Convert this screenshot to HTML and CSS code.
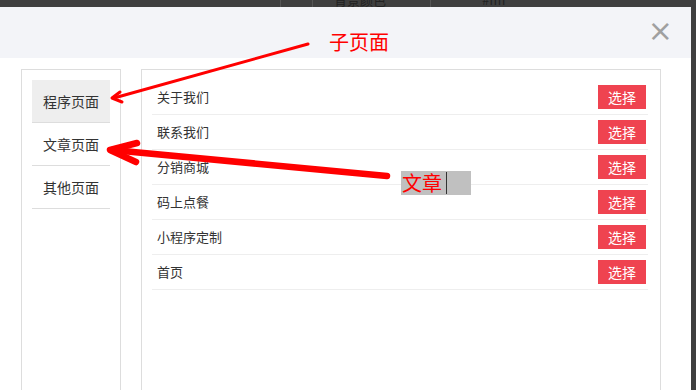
FILE: index.html
```html
<!DOCTYPE html>
<html lang="zh-CN">
<head>
    <meta charset="UTF-8">
    <title>选择页面</title>
    <link rel="stylesheet" href="styles.css">
</head>
<body>

    <div class="backdrop">
        <span class="bd-line l1"></span>
        <span class="bd-text">背景颜色</span>
        <span class="bd-line l2"></span>
        <span class="bd-line l3"></span>
        <span class="bd-text t2">#ffff</span>
    </div>

    <div class="page">
        <div class="modal">
            <div class="modal-head">
                <span class="close">&times;</span>
            </div>
            <div class="modal-body">
                <div class="side">
                    <div class="side-item active">程序页面</div>
                    <div class="side-item">文章页面</div>
                    <div class="side-item">其他页面</div>
                </div>
                <div class="list">
                    <div class="row"><span>关于我们</span><button class="pick">选择</button></div>
                    <div class="row"><span>联系我们</span><button class="pick">选择</button></div>
                    <div class="row"><span>分销商城</span><button class="pick">选择</button></div>
                    <div class="row"><span>码上点餐</span><button class="pick">选择</button></div>
                    <div class="row"><span>小程序定制</span><button class="pick">选择</button></div>
                    <div class="row"><span>首页</span><button class="pick">选择</button></div>
                </div>
            </div>
        </div>
        <div class="edge"></div>
    </div>

    <!-- annotations drawn over the screenshot -->
    <div class="note-box"><span class="note-text">文章</span><span class="caret"></span></div>
    <svg class="marks" width="696" height="390" viewBox="0 0 696 390">
        <g stroke="#ff0000" fill="none" stroke-linecap="round" stroke-linejoin="round">
            <path d="M308 44 L114 98" stroke-width="3"/>
            <path d="M120 92 L112 98 L122 102" stroke-width="3"/>
            <path d="M387 176 L112 150" stroke-width="6.5"/>
            <path d="M137 143 L110 150 L136 162" stroke-width="6.5"/>
        </g>
        <text x="329" y="50" fill="#ff0000" font-size="20" font-family="'Noto Sans CJK SC', sans-serif">子页面</text>
    </svg>

</body>
</html>
```

FILE: styles.css
```css
body {
    margin: 0;
    background-color: #3f3f3f;
    font-family: 'Noto Sans CJK SC', 'Noto Sans', sans-serif;
    color: #333;
    overflow: hidden;
    height: 390px;
    position: relative;
}

.backdrop {
    height: 7px;
    position: relative;
    overflow: hidden;
}

.bd-line {
    position: absolute;
    top: 0;
    width: 1px;
    height: 7px;
    background-color: #555;
}

.l1 { left: 280px; }
.l2 { left: 312px; }
.l3 { left: 430px; }

.bd-text {
    position: absolute;
    left: 334px;
    top: -10px;
    font-size: 13px;
    color: #222;
}

.bd-text.t2 {
    left: 482px;
}

.page {
    display: flex;
    height: 383px;
}

.modal {
    width: 691px;
    background-color: #fff;
}

.modal-head {
    height: 51px;
    background-color: #f3f4f8;
    display: flex;
    justify-content: flex-end;
    align-items: center;
    padding-right: 18px;
}

.close {
    color: #a0a0a0;
    font-size: 30px;
    font-family: 'DejaVu Sans', sans-serif;
    line-height: 1;
    margin-top: -4px;
}

.modal-body {
    display: flex;
    gap: 20px;
    padding: 11px 0 0 21px;
    height: 321px;
}

.side {
    width: 78px;
    border: 1px solid #ddd;
    border-bottom: none;
    padding: 10px;
}

.side-item {
    height: 42px;
    line-height: 42px;
    border-bottom: 1px solid #ddd;
    font-size: 14px;
    padding-left: 11px;
}

.side-item.active {
    background-color: #eee;
}

.list {
    width: 496px;
    border: 1px solid #ddd;
    border-bottom: none;
    padding: 10px 12px 0 10px;
}

.row {
    height: 34px;
    border-bottom: 1px solid #eee;
    display: flex;
    justify-content: space-between;
    align-items: center;
    padding-left: 5px;
    padding-right: 2px;
    font-size: 13px;
}

.row span {
    margin-top: -2px;
}

.pick {
    width: 48px;
    height: 24px;
    border: none;
    background-color: #ef4350;
    color: #fff;
    font-family: inherit;
    font-size: 14px;
    padding: 0;
}

.edge {
    flex: 1;
    background-color: #3f3f3f;
}

.note-box {
    position: absolute;
    left: 401px;
    top: 171px;
    width: 70px;
    height: 24px;
    background-color: #c0c0c0;
    display: flex;
    align-items: center;
}

.note-text {
    color: #ff0000;
    font-size: 20px;
    line-height: 24px;
    padding-left: 1px;
}

.caret {
    width: 1px;
    height: 22px;
    margin-left: 4px;
    background-color: #333;
}

.marks {
    position: absolute;
    left: 0;
    top: 0;
}
```
